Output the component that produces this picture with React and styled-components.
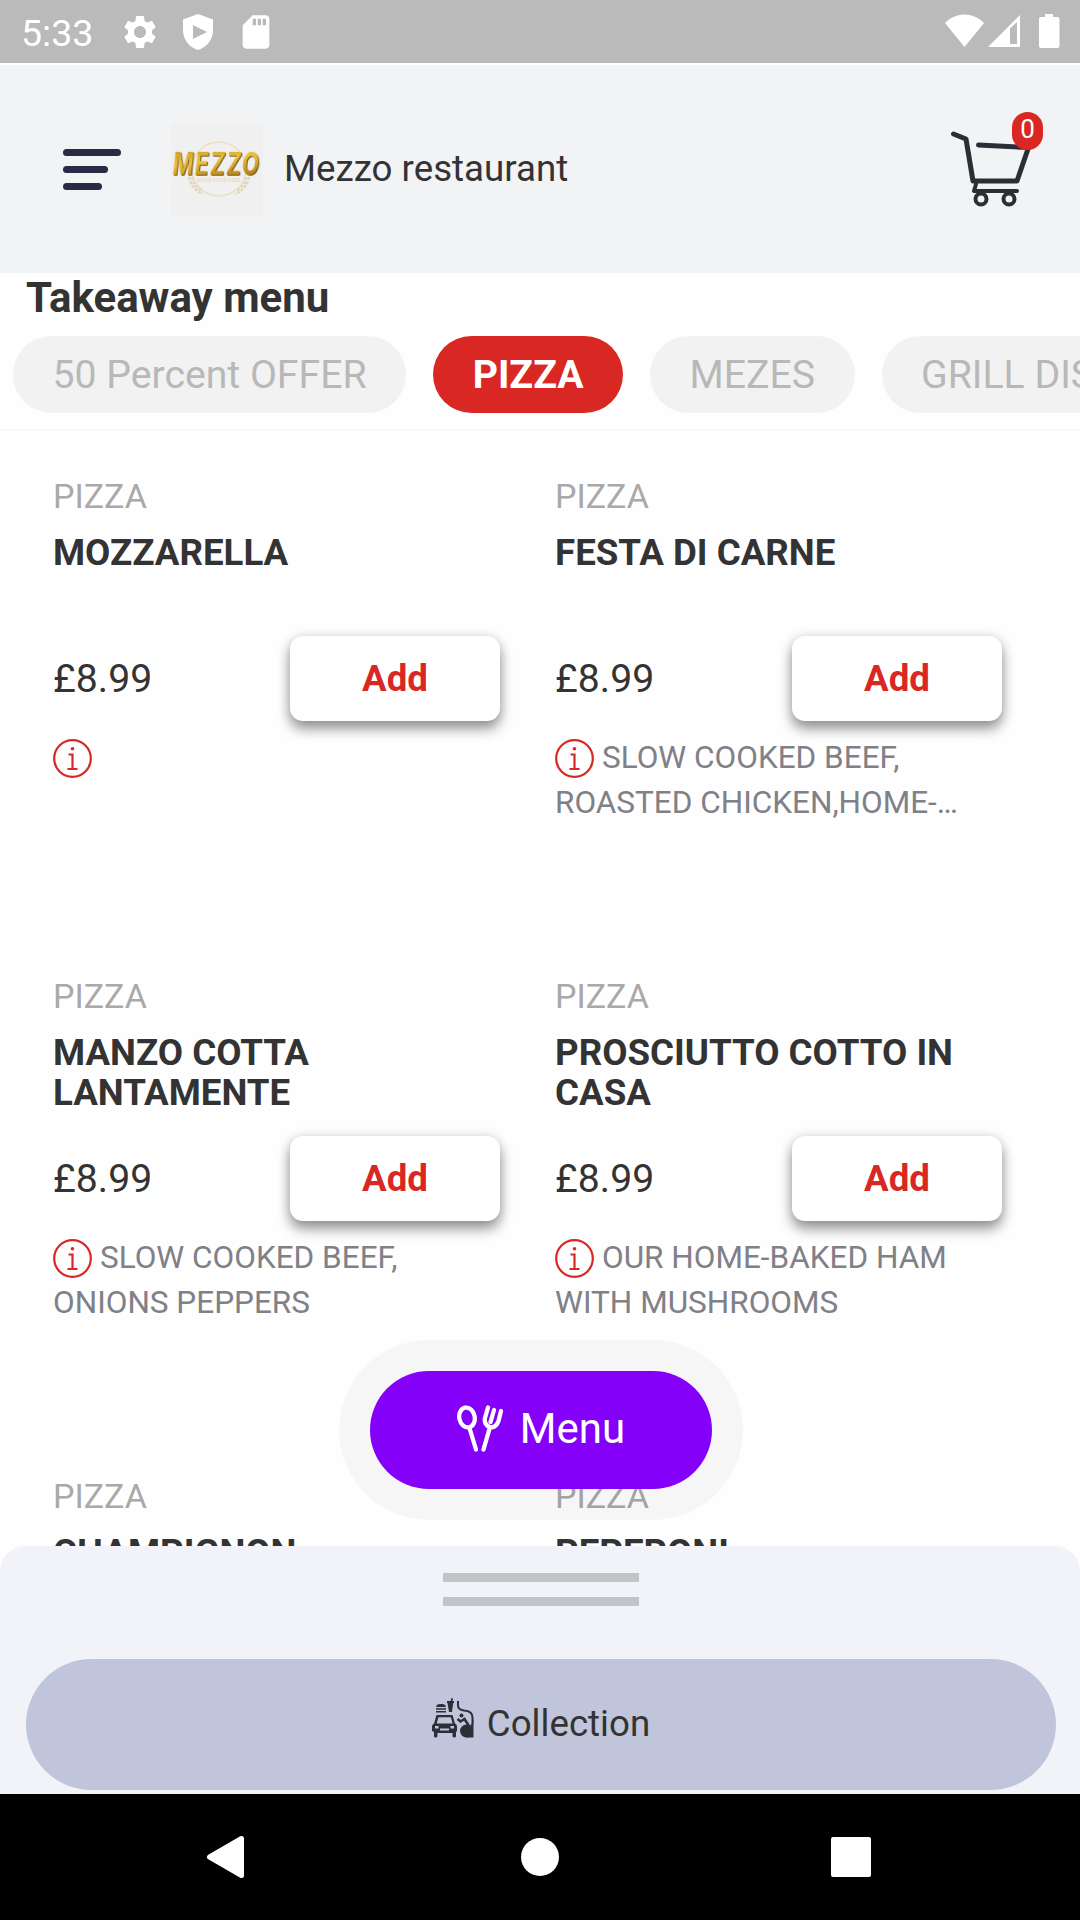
import React from 'react';
import styled, { createGlobalStyle } from 'styled-components';
import { MdSettings, MdSdCard } from 'react-icons/md';

const GlobalStyle = createGlobalStyle`
  :root {
    --red: #d92823;
    --dark: #333333;
    --muted: #a9a9a9;
  }

  * {
    box-sizing: border-box;
  }

  body {
    margin: 0;
    font-family: Roboto, sans-serif;
    color: var(--dark);
    background: white;
  }

  button {
    border: none;
    padding: 0;
    font-family: inherit;
  }

  svg {
    display: block;
    flex: none;
  }
`;

const Screen = styled.div`
  position: relative;
  display: flex;
  flex-direction: column;
  width: 1080px;
  height: 1920px;
  overflow: hidden;
  background: #fefefe;
`;

const StatusBar = styled.div`
  display: flex;
  align-items: center;
  justify-content: space-between;
  height: 63px;
  flex: none;
  padding: 0 20px 0 21px;
  background: #bababa;
  color: white;
`;

const StatusGroup = styled.div`
  display: flex;
  align-items: center;
  gap: 22px;
`;

const Clock = styled.span`
  width: 77px;
  font-size: 37.5px;
  line-height: 44px;
  padding-top: 3px;
`;

const Header = styled.header`
  display: flex;
  align-items: center;
  height: 208px;
  flex: none;
  margin-top: 2px;
  padding: 0 34px 0 63px;
  background: #f2f3f5;
`;

const MenuLines = styled.div`
  display: flex;
  flex-direction: column;
  gap: 10px;
  width: 58px;
`;

const Line = styled.span`
  height: 7px;
  width: ${props => props.$width}px;
  border-radius: 4px;
  background: #292a44;
`;

const Logo = styled.div`
  width: 92px;
  height: 92px;
  margin-left: 50px;
  margin-top: 2px;
  background: #f0f0f0;
`;

const Title = styled.h1`
  flex: 1;
  margin: 0 0 0 21px;
  font-size: 36.7px;
  font-weight: 400;
  line-height: 44px;
`;

const CartButton = styled.div`
  position: relative;
  width: 95px;
  height: 100px;
`;

const Badge = styled.span`
  position: absolute;
  top: -7px;
  right: 3px;
  width: 31px;
  height: 38px;
  border-radius: 16px;
  background: var(--red);
  color: white;
  font-size: 26px;
  line-height: 35px;
  text-align: center;
`;

const MenuHead = styled.section`
  height: 158px;
  flex: none;
  border-bottom: 2px solid #f8f8f8;
`;

const Heading = styled.h2`
  margin: 0;
  padding: 0 26px;
  height: 63px;
  font-size: 42px;
  font-weight: 700;
  line-height: 49px;
`;

const Chips = styled.div`
  display: flex;
  gap: 27px;
  padding-left: 13px;
  overflow: hidden;
`;

const Chip = styled.button`
  flex: none;
  height: 77px;
  padding: 0 39.5px;
  border-radius: 39px;
  font-size: 39.2px;
  font-weight: ${props => props.$active ? 700 : 400};
  color: ${props => props.$active ? 'white' : '#b8b8b8'};
  background: ${props => props.$active ? 'var(--red)' : '#f2f2f2'};
`;

const Items = styled.main`
  display: grid;
  grid-template-columns: 447px 447px;
  grid-auto-rows: 500px;
  column-gap: 55px;
  flex: 1;
  min-height: 0;
  padding: 43px 0 0 53px;
  overflow: hidden;
`;

const Category = styled.p`
  margin: 0;
  height: 59px;
  font-size: 34px;
  line-height: 44px;
  color: var(--muted);
`;

const Name = styled.h3`
  margin: 0;
  height: 103px;
  font-size: 36.7px;
  font-weight: 700;
  line-height: 40px;
`;

const PriceRow = styled.div`
  display: flex;
  align-items: center;
  justify-content: space-between;
  height: 85px;
  font-size: 39.2px;
`;

const AddButton = styled.button`
  width: 210px;
  height: 85px;
  border-radius: 13px;
  background: white;
  color: var(--red);
  font-size: 36.7px;
  font-weight: 700;
  box-shadow: 0 8px 13px rgba(0, 0, 0, 0.4), 0 0 12px rgba(0, 0, 0, 0.12);
`;

const Description = styled.p`
  margin: 13.5px 0 0;
  font-size: 31.5px;
  line-height: 45px;
  color: #808087;
  white-space: pre-line;

  svg {
    display: inline-block;
    vertical-align: -10px;
    margin-right: 8px;
  }
`;

const MenuFloat = styled.div`
  position: absolute;
  left: 339px;
  top: 1340px;
  display: flex;
  align-items: center;
  justify-content: center;
  width: 404px;
  height: 180px;
  border-radius: 90px;
  background: rgba(0, 0, 0, 0.03);
`;

const MenuButton = styled.button`
  display: flex;
  align-items: center;
  justify-content: center;
  gap: 17px;
  width: 342px;
  height: 118px;
  padding-bottom: 3px;
  border-radius: 59px;
  background: #8500f8;
  color: white;
  font-size: 42px;
`;

const Sheet = styled.section`
  display: flex;
  flex-direction: column;
  align-items: center;
  height: 248px;
  flex: none;
  padding: 27px 0 0 2px;
  border-radius: 25px 25px 0 0;
  background: #f2f3f9;
`;

const Handle = styled.span`
  width: 196px;
  height: 9px;
  margin-bottom: 15px;
  background: #c3c4c8;
`;

const CollectionButton = styled.button`
  display: flex;
  align-items: center;
  justify-content: center;
  gap: 13px;
  width: 1030px;
  height: 131px;
  margin-top: 38px;
  padding-bottom: 2px;
  border-radius: 66px;
  background: #c0c5db;
  color: var(--dark);
  font-size: 36.7px;

  svg {
    margin-top: -12px;
  }
`;

const NavBar = styled.nav`
  display: flex;
  align-items: center;
  height: 126px;
  flex: none;
  padding-left: 206px;
  background: black;
`;

const ShieldIcon = () => (
  <svg width="32" height="38" viewBox="0 0 32 38" fill="white">
    <path
      fillRule="evenodd"
      d="M16 1 31 6.500V17c0 9.500-6 17.200-15 20C7 34.200 1 26.500 1 17V6.500zM11 12v14l14-7z"
    />
  </svg>
);

const SignalIcons = () => (
  <svg width="115" height="36" viewBox="0 0 115 36" fill="white">
    <path d="M0 9C11-2.500 28-2.500 39 9L19.500 33z" />
    <path fillRule="evenodd" d="M43 33 75 1v32zM65 14.500V30h7V8z" />
    <path d="M100 0h8v3h4.500a2 2 0 0 1 2 2v27a2 2 0 0 1-2 2H96a2 2 0 0 1-2-2V5a2 2 0 0 1 2-2h4z" />
  </svg>
);

const LogoText = styled.text`
  font: 700 31px Inter, sans-serif;
  letter-spacing: 2px;
  fill: url(#gold);
  filter: drop-shadow(1.2px 1px 0 #6b5520);
`;

const LogoArt = () => (
  <svg width="92" height="92" viewBox="0 0 92 92">
    <defs>
      <linearGradient id="gold" x1="0" y1="0" x2="0.300" y2="1">
        <stop offset="0" stopColor="#c18f16" />
        <stop offset="0.500" stopColor="#efc13c" />
        <stop offset="1" stopColor="#b67c12" />
      </linearGradient>
    </defs>
    <circle cx="48" cy="45" r="27" fill="none" stroke="#eadfc8" strokeWidth="1.500" />
    <g fill="none" stroke="#e4d6b6" strokeWidth="2.500" strokeDasharray="3 1.500">
      <path d="M18 53q2 12 14 17" />
      <path d="M78 53q-2 12-14 17" />
      <path d="M21 53q1 9 10 14" />
      <path d="M75 53q-1 9-10 14" />
    </g>
    <text x="26" y="58" fontSize="5.500" fontWeight="700" fill="#e8dcc0" textLength="44">GOOD FOOD FEEL</text>
    <g transform="translate(6 0) skewX(-6)">
      <LogoText x="0" y="51" textLength="88" lengthAdjust="spacingAndGlyphs">MEZZO</LogoText>
    </g>
  </svg>
);

const CartIcon = () => (
  <svg width="95" height="100" viewBox="951 119 95 100" fill="none" stroke="#2d2e35" strokeWidth="5" strokeLinecap="round" strokeLinejoin="round">
    <path d="M953.500 134 966 139l7 42h44l11.500-33.500L978.500 145" />
    <path d="M976 184l-2 7h43" strokeWidth="4" />
    <circle cx="981" cy="199" r="5.500" strokeWidth="4" />
    <circle cx="1009" cy="199" r="5.500" strokeWidth="4" />
  </svg>
);

const InfoIcon = () => (
  <svg width="39" height="39" viewBox="0 0 39 39" fill="none" stroke="#d92823" strokeWidth="2.200">
    <circle cx="19.500" cy="19.500" r="18.300" />
    <path d="M15.500 15.500h4V30M14.500 30h10" />
    <circle cx="19.500" cy="9.700" r="1.800" fill="#d92823" stroke="none" />
  </svg>
);

const CutleryIcon = () => (
  <svg width="46" height="48" viewBox="0 0 46 48" fill="none" stroke="white" strokeWidth="4.300" strokeLinecap="round" strokeLinejoin="round">
    <ellipse cx="10" cy="12.500" rx="7.700" ry="10" transform="rotate(-12 10 12.500)" />
    <path d="M12.500 23 19 44.500" />
    <path d="M31 2.500 28 13c-1 4 1 8 5 9s7-2 8.500-6l2.500-10M37 5l-3.500 12M33 22 26.500 44.500" />
  </svg>
);

const PickupIcon = () => (
  <svg width="42" height="40" viewBox="0 0 42 40" fill="#2d2e38">
    <path d="M4 9q.5-3 4-3h2q3.500 0 4 3zM4 10.300h10v1.400H4zM4 13h10v1.500H4z" />
    <path d="M15 3h3.500l1-3 1.500.5L20.500 3H22v2h-.8l-1.200 9h-3l-1.500-9H15z" />
    <path
      fillRule="evenodd"
      d="M4.500 17h16l2.500 8.500q2 1 2 3V33l-1 1v4q0 1.500-1.700 1.500T20.500 38v-3h-15v3q0 1.500-1.800 1.500T2 38v-4l-2-1v-4.500q0-2 2-3zM6.500 19.300l-1.800 6.200h16l-1.900-6.200zM3 28v2.500h3.500V28zM18.500 28v2.500H22V28zM8 30.500v2h9v-2z"
    />
    <path d="M26 3v4q0 5 6 5.500 8.500.5 8.500 7V25" fill="none" stroke="#2d2e38" strokeWidth="2" />
    <circle cx="29.500" cy="17.500" r="2" />
    <path d="M25.500 21l3 2.500 4-2.500 4.500 7" fill="none" stroke="#2d2e38" strokeWidth="2.500" />
    <circle cx="34.500" cy="33" r="6.500" />
    <path d="M41.500 22v17.500H34V29l4-1z" />
  </svg>
);

const categories = ['50 Percent OFFER', 'PIZZA', 'MEZES', 'GRILL DISHES'];

const items = [
  { name: 'MOZZARELLA', description: '' },
  { name: 'FESTA DI CARNE', description: 'SLOW COOKED BEEF,\nROASTED CHICKEN,HOME-…' },
  { name: 'MANZO COTTA LANTAMENTE', description: 'SLOW COOKED BEEF,\nONIONS PEPPERS' },
  { name: 'PROSCIUTTO COTTO IN CASA', description: 'OUR HOME-BAKED HAM\nWITH MUSHROOMS' },
  { name: 'CHAMPIGNON', description: '' },
  { name: 'PEPERONI', description: '' },
];

const MenuItem = ({ name, description }) => (
  <article>
    <Category>PIZZA</Category>
    <Name>{name}</Name>
    <PriceRow>
      <span>£8.99</span>
      <AddButton>Add</AddButton>
    </PriceRow>
    <Description>
      <InfoIcon />
      {description}
    </Description>
  </article>
);

const App = () => (
  <Screen>
    <GlobalStyle />
    <StatusBar>
      <StatusGroup>
        <Clock>5:33</Clock>
        <MdSettings size={40} />
        <ShieldIcon />
        <MdSdCard size={40} />
      </StatusGroup>
      <SignalIcons />
    </StatusBar>
    <Header>
      <MenuLines>
        <Line $width={58} />
        <Line $width={45} />
        <Line $width={39} />
      </MenuLines>
      <Logo>
        <LogoArt />
      </Logo>
      <Title>Mezzo restaurant</Title>
      <CartButton>
        <CartIcon />
        <Badge>0</Badge>
      </CartButton>
    </Header>
    <MenuHead>
      <Heading>Takeaway menu</Heading>
      <Chips>
        {categories.map(category => (
          <Chip key={category} $active={category === 'PIZZA'}>{category}</Chip>
        ))}
      </Chips>
    </MenuHead>
    <Items>
      {items.map(item => (
        <MenuItem key={item.name} {...item} />
      ))}
    </Items>
    <Sheet>
      <Handle />
      <Handle />
      <CollectionButton>
        <PickupIcon />
        Collection
      </CollectionButton>
    </Sheet>
    <NavBar>
      <svg width="666" height="44" viewBox="206 1835 666 44" fill="white" stroke="white" strokeLinejoin="round">
        <path d="M209.500 1857 241.500 1838.500v37z" strokeWidth="5" />
        <circle cx="540" cy="1857" r="19" stroke="none" />
        <rect x="833" y="1839" width="36" height="36" strokeWidth="4" />
      </svg>
    </NavBar>
    <MenuFloat>
      <MenuButton>
        <CutleryIcon />
        Menu
      </MenuButton>
    </MenuFloat>
  </Screen>
);

export default App;
